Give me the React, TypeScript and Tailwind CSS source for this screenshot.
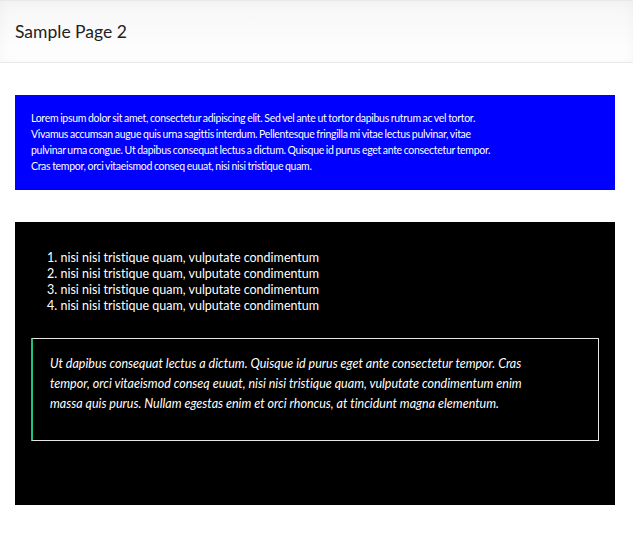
import React from 'react';

const items = [
  'nisi nisi tristique quam, vulputate condimentum',
  'nisi nisi tristique quam, vulputate condimentum',
  'nisi nisi tristique quam, vulputate condimentum',
  'nisi nisi tristique quam, vulputate condimentum',
];

export default function App() {
  return (
    <div className="min-h-screen bg-white font-['Lato',sans-serif] [font-variant-ligatures:none]">
      <header className="h-[63px] border-t border-b border-[#e8e8e8] bg-gradient-to-b from-[#f6f6f6] to-white px-[15px] flex items-center shadow-[inset_0_0_12px_rgba(0,0,0,0.04)]">
        <h1 className="text-[17.5px] text-[#222] leading-none">Sample Page 2</h1>
      </header>

      <main className="pl-[15px] pt-8">
        <section className="w-[600px] bg-[#0000ff] text-white pl-4 pr-[120px] pt-[15px] pb-4">
          <p className="text-[10.5px] leading-4 tracking-[-0.3px] [word-spacing:-0.5px]">
            Lorem ipsum dolor sit amet, consectetur adipiscing elit. Sed vel ante ut tortor dapibus rutrum ac vel tortor.
            Vivamus accumsan augue quis urna sagittis interdum. Pellentesque fringilla mi vitae lectus pulvinar, vitae
            pulvinar urna congue. Ut dapibus consequat lectus a dictum. Quisque id purus eget ante consectetur tempor.
            Cras tempor, orci vitaeismod conseq euuat, nisi nisi tristique quam.
          </p>
        </section>

        <section className="w-[600px] mt-8 bg-black text-white px-4 pt-7 pb-16">
          <ol className="list-decimal list-inside pl-4 text-[12.5px] leading-4">
            {items.map((t, i) => (
              <li key={i}>{t}</li>
            ))}
          </ol>

          <blockquote className="mt-6 border border-[#e6e6e6] border-l-2 border-l-[#1fbf7f] pl-[17px] pr-[46px] pt-[15px] pb-[26px]">
            <p className="italic text-[12.5px] leading-5">
              Ut dapibus consequat lectus a dictum. Quisque id purus eget ante consectetur tempor. Cras tempor, orci
              vitaeismod conseq euuat, nisi nisi tristique quam, vulputate condimentum enim massa quis purus. Nullam
              egestas enim et orci rhoncus, at tincidunt magna elementum.
            </p>
          </blockquote>
        </section>
      </main>
    </div>
  );
}
